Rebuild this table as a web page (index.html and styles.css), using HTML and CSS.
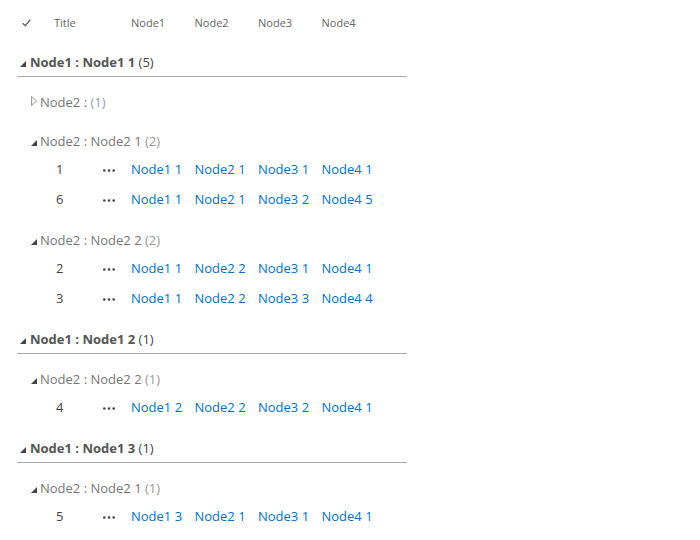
FILE: index.html
```html
<!DOCTYPE html>
<html lang="en">
<head>
    <meta charset="UTF-8">
    <title>List View - Grouped</title>
    <link rel="stylesheet" href="styles.css">
</head>
<body>
    <div class="list">
        <div class="head-row">
            <span class="check">
                <svg width="9" height="8" viewBox="0 0 9 8"><polyline points="0.7,4.2 3.2,6.8 8.3,0.8" fill="none" stroke="#666" stroke-width="1.4"/></svg>
            </span>
            <span class="col-title">Title</span>
            <span class="col">Node1</span>
            <span class="col">Node2</span>
            <span class="col">Node3</span>
            <span class="col">Node4</span>
        </div>

        <!-- group 1 -->
        <div class="group">
            <div class="group-head">
                <svg class="tri" width="6" height="6" viewBox="0 0 6 6"><polygon points="6,0 6,6 0,6" fill="#444"/></svg>
                <b>Node1 : Node1 1</b>&nbsp;<span class="count">(5)</span>
            </div>
            <div class="subgroup">
                <div class="sub-head">
                    <svg class="tri-open" width="6" height="10" viewBox="0 0 6 10"><polygon points="0.5,0.5 5.5,5 0.5,9.5" fill="none" stroke="#999" stroke-width="1"/></svg>
                    Node2 :&nbsp;<span class="sub-count blue">(1)</span>
                </div>
            </div>
            <div class="subgroup">
                <div class="sub-head">
                    <svg class="tri" width="6" height="6" viewBox="0 0 6 6"><polygon points="6,0 6,6 0,6" fill="#444"/></svg>
                    Node2 : Node2 1&nbsp;<span class="sub-count">(2)</span>
                </div>
                <div class="row">
                    <span class="id">1</span>
                    <span class="more"><svg width="12" height="3" viewBox="0 0 12 3"><circle cx="1.3" cy="1.5" r="1.3" fill="#444"/><circle cx="6" cy="1.5" r="1.3" fill="#444"/><circle cx="10.7" cy="1.5" r="1.3" fill="#444"/></svg></span>
                    <a class="cell" href="#">Node1 1</a>
                    <a class="cell" href="#">Node2 1</a>
                    <a class="cell" href="#">Node3 1</a>
                    <a class="cell" href="#">Node4 1</a>
                </div>
                <div class="row">
                    <span class="id">6</span>
                    <span class="more"><svg width="12" height="3" viewBox="0 0 12 3"><circle cx="1.3" cy="1.5" r="1.3" fill="#444"/><circle cx="6" cy="1.5" r="1.3" fill="#444"/><circle cx="10.7" cy="1.5" r="1.3" fill="#444"/></svg></span>
                    <a class="cell" href="#">Node1 1</a>
                    <a class="cell" href="#">Node2 1</a>
                    <a class="cell" href="#">Node3 2</a>
                    <a class="cell" href="#">Node4 5</a>
                </div>
            </div>
            <div class="subgroup">
                <div class="sub-head">
                    <svg class="tri" width="6" height="6" viewBox="0 0 6 6"><polygon points="6,0 6,6 0,6" fill="#444"/></svg>
                    Node2 : Node2 2&nbsp;<span class="sub-count">(2)</span>
                </div>
                <div class="row">
                    <span class="id">2</span>
                    <span class="more"><svg width="12" height="3" viewBox="0 0 12 3"><circle cx="1.3" cy="1.5" r="1.3" fill="#444"/><circle cx="6" cy="1.5" r="1.3" fill="#444"/><circle cx="10.7" cy="1.5" r="1.3" fill="#444"/></svg></span>
                    <a class="cell" href="#">Node1 1</a>
                    <a class="cell" href="#">Node2 2</a>
                    <a class="cell" href="#">Node3 1</a>
                    <a class="cell" href="#">Node4 1</a>
                </div>
                <div class="row">
                    <span class="id">3</span>
                    <span class="more"><svg width="12" height="3" viewBox="0 0 12 3"><circle cx="1.3" cy="1.5" r="1.3" fill="#444"/><circle cx="6" cy="1.5" r="1.3" fill="#444"/><circle cx="10.7" cy="1.5" r="1.3" fill="#444"/></svg></span>
                    <a class="cell" href="#">Node1 1</a>
                    <a class="cell" href="#">Node2 2</a>
                    <a class="cell" href="#">Node3 3</a>
                    <a class="cell" href="#">Node4 4</a>
                </div>
            </div>
        </div>

        <!-- group 2 -->
        <div class="group">
            <div class="group-head">
                <svg class="tri" width="6" height="6" viewBox="0 0 6 6"><polygon points="6,0 6,6 0,6" fill="#444"/></svg>
                <b>Node1 : Node1 2</b>&nbsp;<span class="count">(1)</span>
            </div>
            <div class="subgroup">
                <div class="sub-head">
                    <svg class="tri" width="6" height="6" viewBox="0 0 6 6"><polygon points="6,0 6,6 0,6" fill="#444"/></svg>
                    Node2 : Node2 2&nbsp;<span class="sub-count">(1)</span>
                </div>
                <div class="row">
                    <span class="id">4</span>
                    <span class="more"><svg width="12" height="3" viewBox="0 0 12 3"><circle cx="1.3" cy="1.5" r="1.3" fill="#444"/><circle cx="6" cy="1.5" r="1.3" fill="#444"/><circle cx="10.7" cy="1.5" r="1.3" fill="#444"/></svg></span>
                    <a class="cell" href="#">Node1 2</a>
                    <a class="cell" href="#">Node2 2</a>
                    <a class="cell" href="#">Node3 2</a>
                    <a class="cell" href="#">Node4 1</a>
                </div>
            </div>
        </div>

        <!-- group 3 -->
        <div class="group">
            <div class="group-head">
                <svg class="tri" width="6" height="6" viewBox="0 0 6 6"><polygon points="6,0 6,6 0,6" fill="#444"/></svg>
                <b>Node1 : Node1 3</b>&nbsp;<span class="count">(1)</span>
            </div>
            <div class="subgroup">
                <div class="sub-head">
                    <svg class="tri" width="6" height="6" viewBox="0 0 6 6"><polygon points="6,0 6,6 0,6" fill="#444"/></svg>
                    Node2 : Node2 1&nbsp;<span class="sub-count">(1)</span>
                </div>
                <div class="row">
                    <span class="id">5</span>
                    <span class="more"><svg width="12" height="3" viewBox="0 0 12 3"><circle cx="1.3" cy="1.5" r="1.3" fill="#444"/><circle cx="6" cy="1.5" r="1.3" fill="#444"/><circle cx="10.7" cy="1.5" r="1.3" fill="#444"/></svg></span>
                    <a class="cell" href="#">Node1 3</a>
                    <a class="cell" href="#">Node2 1</a>
                    <a class="cell" href="#">Node3 1</a>
                    <a class="cell" href="#">Node4 1</a>
                </div>
            </div>
        </div>
    </div>
</body>
</html>
```

FILE: styles.css
```css
body {
    margin: 0;
    background: #fff;
    font-family: "Open Sans", "Noto Sans", sans-serif;
    font-size: 13px;
    color: #444;
}
.list {
    width: 700px;
}
.head-row {
    display: flex;
    align-items: center;
    height: 29px;
    padding-top: 8px;
    font-size: 11px;
    color: #666;
}
.check {
    width: 54px;
    padding-left: 22px;
    box-sizing: border-box;
    display: flex;
    align-items: center;
}
.col-title {
    width: 77px;
}
.col {
    width: 63.5px;
}
.group {
    margin-left: 17px;
    width: 390px;
}
.group-head {
    display: flex;
    align-items: center;
    padding: 13px 0 2px 3px;
    line-height: 24px;
    border-bottom: 1px solid #ababab;
    color: #555;
}
.group-head .tri {
    margin-right: 4px;
    margin-top: 3px;
}
.count {
    color: #444;
}
.subgroup {
    padding-bottom: 1px;
}
.sub-head {
    display: flex;
    align-items: center;
    padding: 13px 0 1px 14px;
    line-height: 24px;
    color: #777;
}
.sub-head .tri {
    margin-right: 3px;
    margin-top: 3px;
}
.sub-head .tri-open {
    margin-right: 3px;
    margin-top: -2px;
}
.sub-count {
    color: #999;
}
.sub-count.blue {
    color: #8d9db3;
}
.row {
    display: flex;
    align-items: center;
    height: 30px;
}
.id {
    width: 86px;
    padding-left: 39px;
    box-sizing: border-box;
    color: #444;
}
.more {
    width: 28px;
    display: flex;
    align-items: center;
    padding-top: 2px;
}
.cell {
    width: 63.5px;
    color: #0072c6;
    text-decoration: none;
    white-space: nowrap;
}
```
